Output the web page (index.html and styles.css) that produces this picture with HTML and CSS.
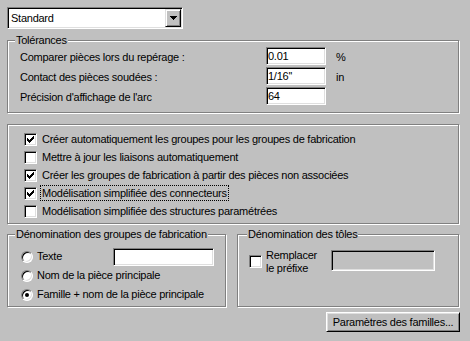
FILE: index.html
```html
<!DOCTYPE html>
<html lang="fr">
<head>
<meta charset="utf-8">
<title>Options</title>
<link rel="stylesheet" href="styles.css">
</head>
<body>
<div class="dialog">
  <div class="combo sunken">
    <span class="combo-text">Standard</span>
    <span class="combo-btn raised">
      <svg width="7" height="4" viewBox="0 0 7 4" shape-rendering="crispEdges"><rect x="0" y="0" width="7" height="1"/><rect x="1" y="1" width="5" height="1"/><rect x="2" y="2" width="3" height="1"/><rect x="3" y="3" width="1" height="1"/></svg>
    </span>
  </div>

  <div class="group tol">
    <span class="legend">Tolérances</span>
    <div class="tol-grid">
      <span class="lbl">Comparer pièces lors du repérage :</span>
      <span class="field sunken">0.01</span>
      <span class="unit">%</span>
      <span class="lbl">Contact des pièces soudées :</span>
      <span class="field sunken">1/16''</span>
      <span class="unit">in</span>
      <span class="lbl">Précision d'affichage de l'arc</span>
      <span class="field sunken">64</span>
      <span class="unit"></span>
    </div>
  </div>

  <div class="group checks">
    <div class="row"><span class="cb sunken"><svg width="7" height="7" viewBox="0 0 7 7" shape-rendering="crispEdges"><rect x="6" y="0" width="1" height="1"/><rect x="5" y="1" width="2" height="1"/><rect x="0" y="2" width="1" height="1"/><rect x="4" y="2" width="3" height="1"/><rect x="0" y="3" width="2" height="1"/><rect x="3" y="3" width="3" height="1"/><rect x="0" y="4" width="5" height="1"/><rect x="1" y="5" width="3" height="1"/><rect x="2" y="6" width="1" height="1"/></svg></span><span class="cb-label">Créer automatiquement les groupes pour les groupes de fabrication</span></div>
    <div class="row"><span class="cb sunken"></span><span class="cb-label">Mettre à jour les liaisons automatiquement</span></div>
    <div class="row"><span class="cb sunken"><svg width="7" height="7" viewBox="0 0 7 7" shape-rendering="crispEdges"><rect x="6" y="0" width="1" height="1"/><rect x="5" y="1" width="2" height="1"/><rect x="0" y="2" width="1" height="1"/><rect x="4" y="2" width="3" height="1"/><rect x="0" y="3" width="2" height="1"/><rect x="3" y="3" width="3" height="1"/><rect x="0" y="4" width="5" height="1"/><rect x="1" y="5" width="3" height="1"/><rect x="2" y="6" width="1" height="1"/></svg></span><span class="cb-label">Créer les groupes de fabrication à partir des pièces non associées</span></div>
    <div class="row"><span class="cb sunken"><svg width="7" height="7" viewBox="0 0 7 7" shape-rendering="crispEdges"><rect x="6" y="0" width="1" height="1"/><rect x="5" y="1" width="2" height="1"/><rect x="0" y="2" width="1" height="1"/><rect x="4" y="2" width="3" height="1"/><rect x="0" y="3" width="2" height="1"/><rect x="3" y="3" width="3" height="1"/><rect x="0" y="4" width="5" height="1"/><rect x="1" y="5" width="3" height="1"/><rect x="2" y="6" width="1" height="1"/></svg></span><span class="cb-label focus">Modélisation simplifiée des connecteurs</span></div>
    <div class="row"><span class="cb sunken"></span><span class="cb-label">Modélisation simplifiée des structures paramétrées</span></div>
  </div>

  <div class="bottom">
    <div class="group names">
      <span class="legend">Dénomination des groupes de fabrication</span>
      <div class="radio-row"><span class="radio"></span><span class="radio-label">Texte</span><span class="text-field sunken"></span></div>
      <div class="radio-row"><span class="radio"></span><span class="radio-label">Nom de la pièce principale</span></div>
      <div class="radio-row"><span class="radio on"></span><span class="radio-label">Famille + nom de la pièce principale</span></div>
    </div>
    <div class="group sheets">
      <span class="legend legend-wide">Dénomination des tôles</span>
      <div class="sheet-row">
        <span class="cb sunken"></span>
        <span class="sheet-label">Remplacer le préfixe</span>
        <span class="disabled-field sunken"></span>
      </div>
    </div>
  </div>

  <div class="actions">
    <button class="btn raised" type="button">Paramètres des familles...</button>
  </div>
</div>
</body>
</html>
```
FILE: styles.css
```css
* { box-sizing: border-box; }
html, body { margin: 0; background: #c0c0c0; }
body {
  font: 11px/13px "Liberation Sans", Arial, sans-serif;
  letter-spacing: -0.25px;
  color: #000;
  width: 470px;
  height: 341px;
  overflow: hidden;
}
.dialog {
  padding: 7px 0 0 7px;
  width: 470px;
  display: flex;
  flex-direction: column;
}

.sunken {
  border: 1px solid;
  border-color: #808080 #fff #fff #808080;
  box-shadow: inset 1px 1px 0 #000, inset -1px -1px 0 #dfdfdf;
  background: #fff;
}
.raised {
  border: 1px solid;
  border-color: #dfdfdf #000 #000 #dfdfdf;
  box-shadow: inset 1px 1px 0 #fff, inset -1px -1px 0 #808080;
  background: #c0c0c0;
}

/* combo */
.combo {
  width: 176px;
  height: 22px;
  padding: 1px;
  display: flex;
}
.combo-text {
  flex: 1;
  padding-left: 2px;
  line-height: 18px;
}
.combo-btn {
  width: 16px;
  display: flex;
  align-items: center;
  justify-content: center;
}
.combo-btn svg { display: block; }

/* group boxes */
.group {
  position: relative;
  border: 1px solid #808080;
  box-shadow: 1px 1px 0 #fff, inset 1px 1px 0 #fff;
}
.legend {
  position: absolute;
  top: -7px;
  left: 7px;
  padding: 0 1px;
  background: #c0c0c0;
  line-height: 13px;
  white-space: nowrap;
}
.legend-wide { left: 9px; }

.tol {
  width: 452px;
  margin-top: 11px;
  height: 73px;
  padding: 6px 0 0 12px;
}
.tol-grid {
  display: grid;
  grid-template-columns: 246px 60px auto;
  grid-auto-rows: 18px;
  row-gap: 2px;
}
.lbl, .unit { padding-top: 4px; }
.unit { padding-left: 10px; }
.field {
  padding-left: 1px;
  line-height: 16px;
}

/* checkboxes */
.checks {
  width: 452px;
  margin-top: 11px;
  height: 100px;
  padding: 5px 0 3px 16px;
  display: flex;
  flex-direction: column;
}
.row {
  height: 18px;
  display: flex;
  align-items: center;
}
.cb {
  flex: none;
  width: 13px;
  height: 13px;
  display: flex;
  align-items: center;
  justify-content: center;
}
.cb svg { display: block; }
.cb-label {
  margin-left: 3px;
  padding: 0 1px;
  border: 1px dotted transparent;
  line-height: 14px;
  white-space: nowrap;
}
.cb-label.focus { border-color: #000; }

/* bottom groups */
.bottom {
  display: flex;
  gap: 11px;
  margin-top: 10px;
}
.names {
  width: 219px;
  height: 73px;
  padding: 12px 11px 0 13px;
}
.radio-row {
  height: 19px;
  display: flex;
  align-items: center;
}
.radio {
  position: relative;
  flex: none;
  width: 12px;
  height: 12px;
  border-radius: 50%;
  border: 1px solid;
  border-color: #808080 #fff #fff #808080;
  box-shadow: inset 1px 1px 0 #000, inset -1px -1px 0 #dfdfdf;
  background: #fff;
}
.radio.on::after {
  content: "";
  position: absolute;
  left: 3px;
  top: 3px;
  width: 4px;
  height: 4px;
  border-radius: 50%;
  background: #000;
}
.radio-label {
  margin-left: 4px;
  white-space: nowrap;
}
.text-field {
  margin-left: auto;
  width: 101px;
  height: 18px;
}

.sheets {
  width: 222px;
  height: 73px;
  padding: 14px 0 0 11px;
}
.sheet-row {
  display: flex;
  align-items: flex-start;
  gap: 4px;
}
.sheet-row .cb { margin-top: 6px; }
.sheet-label {
  width: 61px;
  line-height: 13px;
}
.disabled-field {
  width: 104px;
  height: 21px;
  margin-top: 1px;
  background: #c0c0c0;
}

/* actions */
.actions {
  width: 453px;
  display: flex;
  justify-content: flex-end;
  margin-top: 5px;
}
.btn {
  width: 134px;
  height: 20px;
  padding: 0;
  font: inherit;
  letter-spacing: inherit;
  color: #000;
  border-color: #fff #000 #000 #fff;
  box-shadow: inset 1px 1px 0 #dfdfdf, inset -1px -1px 0 #808080;
}
```
